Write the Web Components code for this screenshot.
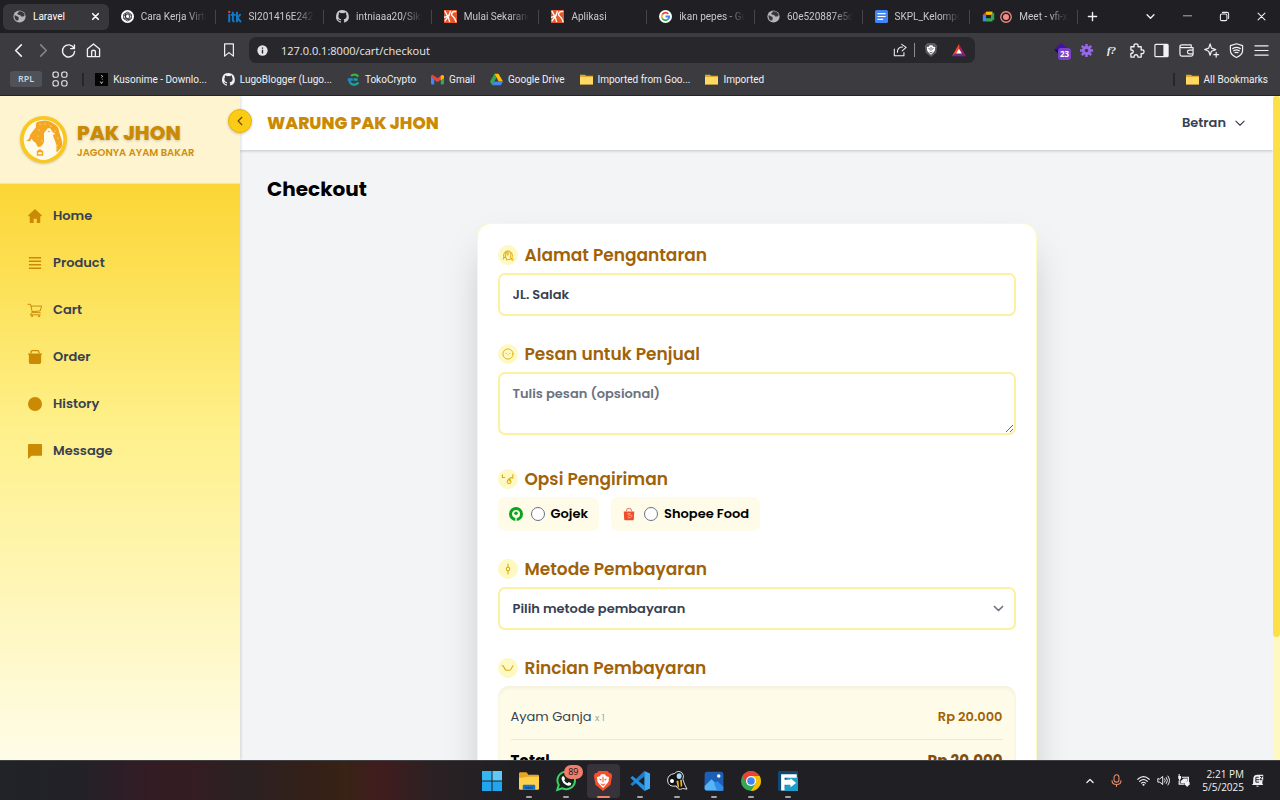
<!DOCTYPE html>
<html lang="id">
<head>
<meta charset="utf-8">
<title>Laravel</title>
<style>
html,body{margin:0;height:100%;overflow:hidden;background:#202024}
body{font-family:Roboto,"Noto Sans",sans-serif;font-size:10px;color:#f1f1f3}
</style>
</head>
<body>
<desktop-screen></desktop-screen>
<script>
const line = (d, w = 1.5) => `<g fill="none" stroke="currentColor" stroke-width="${w}" stroke-linecap="round" stroke-linejoin="round">${d}</g>`;
const github = `<path fill="currentColor" d="M8 0a8 8 0 0 0-2.5 15.600c.4.1.5-.2.5-.4v-1.500c-2.200.5-2.700-1-2.700-1-.4-.9-.9-1.200-.9-1.200-.7-.5.1-.5.1-.5.8.1 1.200.8 1.200.8.7 1.300 1.900.9 2.300.7.1-.5.3-.9.5-1.100-1.800-.2-3.600-.9-3.600-4 0-.9.3-1.600.8-2.100-.1-.2-.4-1 .1-2.100 0 0 .7-.2 2.200.8a7.700 7.700 0 0 1 4 0c1.500-1 2.200-.8 2.200-.8.4 1.100.2 1.900.1 2.100.5.6.8 1.300.8 2.100 0 3.100-1.900 3.800-3.700 4 .3.3.6.8.6 1.500v2.200c0 .2.1.5.6.4A8 8 0 0 0 8 0z"/>`;
const globe = `<circle cx="8" cy="8" r="7.500" fill="#b4b6ba"/><path fill="#37373c" d="M2 6.500c2 0 2 1.500 3.500 1.500S7 9.500 7 11s-1 2-2.500 2C2.500 12 1.500 9 2 6.500zM7 1.500c0 1.500-.5 2-2 2.500l1.500 2c1.500-.5 3 .5 3.500 2h3l1.500-2C13.500 3 11 1 7 1.500z"/>`;
const folder = `<path fill="#e0a92c" d="M0 2h6l1.500 1.500H16v10.500H0z"/><path fill="#ffd964" d="M0 5h16v9H0z"/>`;
const brand = `<path fill="#e4572a" d="M0 0h16v16H0z"/><path fill="none" stroke="#fff" stroke-width="1.700" d="M1 1c2 5 5 7 6 14M8 1C7 7 4 9 1 14M15 2c-6-1-7 4-4 6s3 5 4 7M0 9l7-2"/>`;
const lion = `<path fill="#fff" d="M3.200 4.700l2.300-.5 1-1.700h3l1 1.700 2.300.5-.4 3.800-1.900 2.500L8 13.500 5.500 11 3.600 8.500z"/><path fill="var(--lion,#f4502a)" d="M4.600 5.900l2.500.8-.8 1.100zM11.400 5.900l-2.500.8.8 1.100zM7.600 4.500h.8v4.500h-.8zM6 9.700l2 1.100 2-1.100-.5 1.100L8 12l-1.500-1.200z"/>`;
const ICONS = {
globe, github, folder, brand,
gpt:`<circle cx="8" cy="8" r="8" fill="#fff"/><g fill="none" stroke="#222" stroke-width="1"><path d="M8 2.500l4.700 2.700v5.600L8 13.500l-4.700-2.700V5.200z"/><path d="M5.500 4v5l5 3M13 7L8.300 4 3.500 7M3.500 10l5 2 4-2.500M8 5.200l2.500 1.400v2.800L8 10.800 5.500 9.400V6.600z"/></g>`,
itk:`<g fill="none" stroke="#1478c8" stroke-width="2.400"><path d="M1.500 5v10M6 2v10q0 2 2 2M3.500 6h6M11 2v13M15.500 5l-4 4.500L16 15"/></g><circle cx="1.500" cy="2.500" r="1.500" fill="#e23a3a"/>`,
google:`<circle cx="8" cy="8" r="8" fill="#fff"/><g fill="none" stroke-width="2.200"><path stroke="#ea4335" d="M11.500 4.900A4.600 4.600 0 0 0 4 5.700"/><path stroke="#fbbc05" d="M4 5.700a4.600 4.600 0 0 0 0 4.600"/><path stroke="#34a853" d="M4 10.300a4.600 4.600 0 0 0 7 1.200"/><path stroke="#4285f4" d="M11 11.500A4.600 4.600 0 0 0 12.600 8H8"/></g>`,
docs:`<rect width="16" height="16" rx="2" fill="#4285f4"/><path stroke="#fff" stroke-width="1.500" d="M3 4.500h10M3 8h10M3 11.500h7"/>`,
meet:`<path fill="#ea4335" d="M1 6l4-4v4z"/><path fill="#fbbc05" d="M5 2h8v4H5z"/><path fill="#4285f4" d="M1 6h4v8H1z"/><path fill="#34a853" d="M5 10h8v4H5zM11 6l4-3v10l-4-3z"/>`,
rec:`<circle cx="8" cy="8" r="7" fill="none" stroke="#f28b82" stroke-width="1.700"/><circle cx="8" cy="8" r="4" fill="#f28b82"/>`,
close:line('<path d="M3 3l10 10M13 3L3 13"/>'), boldclose:line('<path d="M4 4l8 8M12 4l-8 8"/>',2.4),
plus:line('<path d="M8 2v12M2 8h12"/>',2), down:line('<path d="M3 5.500l5 5 5-5"/>',2), up:line('<path d="M3 10.500l5-5 5 5"/>',2),
thin:line('<path d="M2.500 5.500l5.500 5.500 5.500-5.500"/>',1.5),
left:line('<path d="M11 2L5 8l6 6"/>',1.7), right:line('<path d="M5 2l6 6-6 6"/>',1.7),
min:line('<path d="M2 7h12"/>',1), restore:line('<rect x="2" y="4.500" width="9.500" height="9.500" rx="2"/><path d="M5 2h7q2 0 2 2v7"/>'),
reload:line('<path d="M13.800 5.500A6.500 6.500 0 1 0 14.500 9M14.300 2v4h-4"/>',1.5),
home:line('<path d="M1.500 6.500L8 1l6.500 5.500V14.500h-13zM6 14V8.500q2-1.500 4 0V14"/>',1.4),
mark:line('<path d="M3 1h10v14l-5-4-5 4z"/>',1.4),
info:`<circle cx="8" cy="8" r="7.500" fill="#e4e4e7"/><path fill="#28282c" d="M7 3.500h2v2H7zM7 7h2v5.500H7z"/>`,
share:line('<path d="M1.500 7v7.500h11V11M5 10.500q0-6 6-6M10 1.500l5 3.500-4.500 4"/>',1.2),
brave:`<path fill="#5b5b66" d="M4 0h8l3 3-1 8-6 5-6-5-1-8z"/><g style="--lion:#44444d">${lion}</g>`,
bat:`<path fill="#ff4724" d="M8 1L0 15l8-5z"/><path fill="#9e1f63" d="M8 1l8 14-8-5z"/><path fill="#662d91" d="M0 15h16L8 9.500z"/><path fill="#fff" d="M8 6.500l3.300 5.500H4.700z"/>`,
diamond:`<path fill="#4212a0" d="M8 0l8 7-8 7-8-7z"/><path fill="#17095a" d="M0 7h6l2 7z"/>`,
gear:`<g stroke="#9a66f0" stroke-width="2.600"><path d="M8 1v14M1 8h14M3 3l10 10M13 3L3 13"/></g><circle cx="8" cy="8" r="4.800" fill="#9a66f0"/><circle cx="8" cy="8" r="1.900" fill="#3b3b40"/>`,
puzzle:line('<path d="M2 4h3.500q-1-3 2-3t2 3H13v3.500q3-.8 3 1.800t-3 1.700V15H9.500q.3-2.500-2-2.500T5.500 15H2v-4q2.500 0 2.500-1.800T2 7.500z"/>',1.4),
panel:line('<rect x="1" y="1.500" width="14" height="13" rx="1"/>',1.3)+'<path fill="#f2f2f4" d="M10 2h5v12h-5z"/>',
wallet:line('<path d="M1 4.500V12q0 2 2 2h10q2 0 2-2V5H3Q1 5 1 3.500T3 2h10v3M15 7.500h-4q-2 0-2 2t2 2h4"/>',1.3),
spark:line('<path d="M6.500 1L8 5.500 12.500 7 8 8.800 6.500 13 5 8.800.7 7 5 5.500zM13 10v5M10.500 12.500h5"/>',1.3),
shield:line('<path d="M8 .8l6.500 2V8q0 4.500-6.500 7.500Q1.500 12.500 1.500 8V2.800zM4 6q4-2.500 8 0M5 8.300q3-1.800 6 0M6.500 10.300q1.500-.8 3 0"/>',1.3),
menu:line('<path d="M1 3h14M1 8h14M1 13h14"/>',1.3),
apps:line('<rect x="0" y="0" width="6" height="6" rx="2"/><rect x="10" y="0" width="6" height="6" rx="2"/><rect x="0" y="10" width="6" height="6" rx="2"/><rect x="10" y="10" width="6" height="6" rx="2"/>',1.3),
kuso:'<path fill="#050505" d="M0 0h16v16H0z"/><path stroke="#ddd" stroke-width="1.100" fill="none" d="M7.500 3l2 1-1.500 1.500M9 7v1M6.500 10.500l1.500 2.500 1.500-2.500"/>',
toko:'<g fill="none" stroke-width="2.800"><path stroke="#37b34a" d="M14 4.500A6 6 0 0 0 5 3.500"/><path stroke="#1b8ecb" d="M4 12a6 6 0 0 1-1-3M1 8h6"/><path stroke="#13a89e" d="M4 12a6 6 0 0 0 10-.5M8 8h5"/></g>',
gmail:'<path fill="#4285f4" d="M0 4h4v10H1q-1 0-1-1z"/><path fill="#34a853" d="M12 4h4v9q0 1-1 1h-3z"/><path fill="#ea4335" d="M0 4q1-3 3.500-1L8 6.500 12.500 3v5L8 11.500 3.500 8z"/><path fill="#fbbc04" d="M12 3.500Q15 1 16 4v2l-4 3z"/>',
drive:'<path fill="#34a853" d="M5.500 1L0 10.500 2.700 15 8 5.500z"/><path fill="#fbbc04" d="M5.500 1h5l5.500 9.500h-5.300z"/><path fill="#4285f4" d="M5 10.500h11L13.300 15H2.700z"/>',
nhome:'<path fill="currentColor" d="M8 0l8 7.500-1 1.200-1-.6V16h-4v-5H6.500v5H2V8l-1 .7L0 7.500z"/>',
nlist:'<path stroke="currentColor" stroke-width="1.600" d="M1 2h14M1 6h14M1 10h14M1 14h14"/>',
ncart:line('<path d="M0 1.500h3l2 9.500h9M3.300 3.500H15.500L14 9 4.700 10M4.500 11L2.500 13.500H14"/><circle cx="4.500" cy="15" r=".7"/><circle cx="12.500" cy="15" r=".7"/>',1.1),
nbag:'<path fill="currentColor" d="M0 4h16v1.500h-1V14q0 2-2 2H3q-2 0-2-2V5.500H0z"/><path fill="none" stroke="currentColor" stroke-width="1.500" d="M3.500 4V2.200q0-1.400 1.500-1.400h6q1.500 0 1.500 1.400V4"/>',
ndot:'<circle cx="8" cy="8" r="8" fill="currentColor"/>',
nmsg:'<path fill="currentColor" d="M1 0h14q1 0 1 1v11.500q0 1-1 1H4L0 17V1q0-1 1-1z"/>',
fpin:line('<path d="M3 12a6 6 0 1 1 10.500-1M5 10.500Q3 3 6 3.500L7 8M8 3v5M10 4q3 2 1 7M1.500 13.500q0-3 2.500-2.500t2 3.500q3 0 6-1.500M12 12.500q3-1 3 1.500t-3 0z"/>',1.3),
fmsg:line('<circle cx="8" cy="8" r="6.800"/><path d="M5.500 7v.3M10.500 7v.3M8 9v.2"/>',1.2),
fship:line('<path d="M.5 2.500v3.500h3M14.500 2v4.500H11L9 9"/><circle cx="9.500" cy="11.500" r="2.500"/><path d="M8.500 8.500h2v2"/>',1.4),
fpay:line('<circle cx="8" cy="8" r="2.300"/><path d="M8 1.500v4M8 10.500v4"/>',1.4),
fsum:line('<path d="M0 5h1.500L4 9.500q.8 1.500 2 1.500h4q1.200 0 2-1.500L14.500 5"/>',1.4),
gojek:'<circle cx="8" cy="8" r="6.300" fill="none" stroke="#0aa51c" stroke-width="3.400"/><circle cx="8" cy="7" r="2" fill="#0aa51c"/><path stroke="#fffdf0" stroke-width="1.500" d="M8 12v4"/>',
shopee:'<path fill="#ee4d2d" d="M2 5h12l-.5 9q0 1-1 1h-9q-1 0-1-1z"/><path fill="none" stroke="#f58a74" stroke-width="1.300" d="M5 5q0-3.500 3-3.500T11 5"/><path fill="none" stroke="#f9b3a4" stroke-width="1" d="M10 7.700q-3.500-1.600-3.500.3t3.300 1.400.1 2.600q-1.700.6-3.500-.6"/>',
win:'<path fill="#35b6f4" d="M0 0h7.600v7.600H0z"/><path fill="#5fcaf8" d="M8.400 0H16v7.600H8.400z"/><path fill="#22a5ef" d="M0 8.400h7.600V16H0zM8.400 8.400H16V16H8.400z"/>',
files:'<path fill="#e9a520" d="M0 2q0-1 1-1h5l1.500 2H15q1 0 1 1v10H0z"/><path fill="#ffd04c" d="M0 5.500L7 4.500h9V14q0 1-1 1H1q-1 0-1-1z"/><path fill="#1771c7" d="M3 15v-3q0-1 1-1h8q1 0 1 1v3z"/><path fill="#0b4e92" d="M5 13h6v1H5z"/>',
wa:'<path fill="#15241b" stroke="#3bd366" stroke-width="1.600" d="M1 15.200l1.200-4A7 7 0 1 1 5 13.800z"/><path fill="#fff" d="M5 4.300l1.300-.2 1 2.200-.8 1q1 1.800 2.700 2.500l1-1 2 1-.4 1.400q-1.500 1.200-4-.2T4.600 7q-.5-1.700.4-2.700z"/>',
bravebig:`<path fill="#f4502a" d="M4.500 0h7L13 1.500l1.500.3.8 2L14 11l-6 5-6-5L.7 3.800l.8-2L3 1.500z"/>${lion}`,
code:'<path fill="#1b7fcc" d="M11.500 0v4.300L2 12 .3 10.600z"/><path fill="#2490e0" d="M11.500 16v-4.300L2 4 .3 5.400z"/><path fill="#3eaaf5" d="M11.500 0L16 2v12l-4.500 2z"/>',
bee:'<path fill="#111" stroke="#fff" stroke-width=".7" d="M6 2q3-3 6-.5 2 2 .7 5l1.300 4 2 4-3.500-.5Q9 16 7.500 12 1 13 .5 8T6 2z"/><circle cx="4" cy="8" r="1.600" fill="#fff"/><path fill="#f3b628" d="M7.500 8l1.600-.5.6 6-1.200-1zM10.500 7h1.400l.3 5-1.200.8z"/><ellipse cx="9.700" cy="4" rx="2" ry="2.300" fill="#a7d9f7"/>',
photo:'<rect x=".5" y=".5" width="15" height="15" rx="2" fill="#1c5fb4"/><path fill="#57b5f7" d="M.5 12L6 6.500l9.500 9H2q-1.500 0-1.500-1.500z"/><path fill="#2e8be6" d="M8 10l2.500-2 5 4.500v3h-5z"/><circle cx="11.800" cy="4" r="1.400" fill="#fff"/>',
chrome:'<circle cx="8" cy="8" r="8" fill="#34a853"/><path fill="#ea4335" d="M1.100 4A8 8 0 0 1 14.900 4H8L4.500 10z"/><path fill="#fbbc04" d="M14.900 4A8 8 0 0 1 8 16l3.500-6L8 4z"/><circle cx="8" cy="8" r="4" fill="#fff"/><circle cx="8" cy="8" r="3" fill="#4285f4"/>',
fapp:'<rect width="16" height="16" rx="1" fill="#104a73"/><path fill="#1e9fca" d="M7 5h9v11H5z"/><path fill="#fff" d="M2.500 2.500H15v2.800H5.300V7H10V5.800l4.500 3.700L10 13v-2H5.300v4.500H2.500z"/>',
mic:line('<rect x="5" y="1" width="6" height="9" rx="3"/><path d="M2.500 8q0 5 5.500 5t5.500-5M8 13v2.500"/>',1.3),
wifi:line('<path d="M1 6.500q7-6.500 14 0M3.200 9q4.800-4.500 9.600 0M5.500 11.200q2.500-2 5 0"/>',1.4)+'<circle cx="8" cy="13.300" r="1.300" fill="currentColor"/>',
sound:line('<path d="M1 6v4h2.500L7 13V3L3.500 6zM9.500 6q1.500 2 0 4M11.500 4.300q3 3.700 0 7.400M13.500 2.500q4 5.500 0 11"/>',1.2),
batt:'<path fill="currentColor" d="M2 0h1.300v2.500H5v3l-1 1V8H2.500V6.500l-1-1v-3H2z"/><path fill="none" stroke="currentColor" stroke-width="1.500" d="M6 4h8v6M2.700 8v4.500H9"/><path fill="currentColor" d="M4.500 11V9L8 5.500h5V8L9 11.500z"/><path fill="currentColor" d="M9.500 10l3-1.500 3 1.500v2.500L12.500 16l-3-3.500z"/>',
bell:'<path fill="currentColor" d="M3 4q1-3 5-3h7v7h-1v4l1 1.500H1L2.500 12zM6 14.500h4q-2 2.500-4 0z"/><path fill="none" stroke="#222" stroke-width="1.200" d="M6 4h3.500M6 7h4M6 10h4M6 4v6M11 3h3l-3 4h3"/>'
};

class Base extends HTMLElement {
  connectedCallback() {
    if (this.shadowRoot) return;
    this.attachShadow({ mode: 'open' }).innerHTML = `<style>*{box-sizing:border-box}${this.css()}</style>${this.html()}`;
  }
  get(n) { return this.getAttribute(n) || ''; }
  css() { return ''; }
  html() { return '<slot></slot>'; }
}

customElements.define('ui-icon', class extends Base {
  css() { return ':host{display:inline-block;flex:none;width:var(--size,14px);height:var(--size,14px)}svg{display:block;width:100%;height:100%;overflow:visible}'; }
  html() { return `<svg viewBox="0 0 16 16" aria-hidden="true">${ICONS[this.get('name')]}</svg>`; }
});

/* ---------- browser chrome ---------- */
customElements.define('browser-tab', class extends Base {
  css() { return `
    :host{display:flex;align-items:center;min-width:0;padding:0 10px;color:#c9c9cd;--size:13px;height:26px;border-radius:6px;position:relative}
    :host([active]){background:#37373c;color:#fff}
    :host(:not([active]))::after{content:"";position:absolute;right:0;top:6px;width:1px;height:14px;background:#45454b}
    ui-icon+ui-icon{margin-left:5px;--size:12px}
    span{flex:1;margin-left:7px;white-space:nowrap;overflow:hidden;-webkit-mask-image:linear-gradient(90deg,#000 calc(100% - 20px),transparent)}
    :host([active]) span{-webkit-mask-image:none}
    button{all:unset;display:flex;--size:11px;margin-right:-2px}`; }
  html() { return `<ui-icon name="${this.get('icon')}"></ui-icon>${this.get('extra') ? `<ui-icon name="${this.get('extra')}"></ui-icon>` : ''}<span><slot></slot></span>${this.hasAttribute('active') ? '<button aria-label="Close tab"><ui-icon name="boldclose"></ui-icon></button>' : ''}`; }
});
customElements.define('tab-strip', class extends Base {
  css() { return `
    :host{display:flex;align-items:center;height:33px;background:#202024;padding-left:3px}
    .tabs{flex:0 1 1075px;min-width:0;display:grid;grid-template-columns:repeat(10,minmax(0,1fr));column-gap:2px}
    button{all:unset;display:flex;--size:11px;margin-left:9px}
    .win{margin-left:auto;display:flex;gap:26px;padding-right:13px}.win button{margin:0}`; }
  html() { return `<div class="tabs">
    <browser-tab icon="globe" active>Laravel</browser-tab><browser-tab icon="gpt">Cara Kerja Virtual</browser-tab>
    <browser-tab icon="itk">SI201416E2425</browser-tab><browser-tab icon="github">intniaaa20/Sikma</browser-tab>
    <browser-tab icon="brand">Mulai Sekarang</browser-tab><browser-tab icon="brand">Aplikasi</browser-tab>
    <browser-tab icon="google">ikan pepes - Google</browser-tab><browser-tab icon="globe">60e520887e5d0</browser-tab>
    <browser-tab icon="docs">SKPL_Kelompok</browser-tab><browser-tab icon="meet" extra="rec">Meet - vfi-x</browser-tab></div>
    <button aria-label="New tab"><ui-icon name="plus"></ui-icon></button>
    <div class="win"><button aria-label="Search tabs"><ui-icon name="down"></ui-icon></button><button aria-label="Minimize"><ui-icon name="min"></ui-icon></button><button aria-label="Restore"><ui-icon name="restore"></ui-icon></button><button aria-label="Close"><ui-icon name="close"></ui-icon></button></div>`; }
});
customElements.define('address-bar', class extends Base {
  css() { return `
    :host{display:flex;align-items:center;height:34px;background:#3b3b40;padding:0 11px}
    button{all:unset;display:flex;position:relative}
    .nav{display:flex;gap:10px;--size:15px}.dim{color:#85858b}
    .mark{margin-left:121px}
    .field{flex:0 1 726px;min-width:0;height:26px;margin-left:13px;background:#28282c;border-radius:7px;display:flex;align-items:center;padding:0 9px 0 8px;--size:11px}
    input{flex:1;min-width:0;border:0;background:none;outline:0;color:#e8e8eb;font:11px "Open Sans",sans-serif;padding:0 0 0 13px}
    .field i{width:1px;height:14px;background:#8c8c92;margin:0 9px 0 7px}
    .field button{--size:14px}.field button+button{margin-left:14px}
    .ext{margin-left:auto;display:flex;align-items:center;gap:10px;--size:15px}
    .fn{font:italic 700 11px "Liberation Serif",serif;color:#f1f1f3;width:15px;justify-content:center}
    .badge{position:absolute;left:4px;top:5px;background:#7a42c8;color:#fff;font:700 8px/12px "Open Sans",sans-serif;padding:0 2px;border-radius:3px}`; }
  html() { const b = (i, l, c = '') => `<button class="${c}" aria-label="${l}"><ui-icon name="${i}"></ui-icon></button>`;
    return `<div class="nav">${b('left','Back')}${b('right','Forward','dim')}${b('reload','Reload')}${b('home','Home')}</div>${b('mark','Bookmark','mark')}
    <div class="field"><ui-icon name="info"></ui-icon><input aria-label="Address" value="127.0.0.1:8000/cart/checkout">${b('share','Share')}<i></i>${b('brave','Shields')}${b('bat','Rewards')}</div>
    <div class="ext"><button aria-label="Extension"><ui-icon name="diamond"></ui-icon><span class="badge">23</span></button>${b('gear','Settings extension')}<button class="fn">f?</button>${b('puzzle','Extensions')}${b('panel','Sidebar')}${b('wallet','Wallet')}${b('spark','Assistant')}${b('shield','VPN')}${b('menu','Menu')}</div>`; }
});
customElements.define('bookmark-link', class extends Base {
  css() { return ':host{display:block}a{display:flex;align-items:center;gap:5px;color:#f1f1f3;text-decoration:none;white-space:nowrap;--size:13px}'; }
  html() { return `<a href="#"><ui-icon name="${this.get('icon')}"></ui-icon><slot></slot></a>`; }
});
customElements.define('bookmark-bar', class extends Base {
  css() { return `
    :host{display:flex;align-items:center;height:29px;background:#3b3b40;border-bottom:1px solid #242428;padding:0 12px 4px 10px;gap:15px}
    .group{background:#505259;color:#c4dbe8;font:600 9px/16px "Open Sans",sans-serif;border:0;border-radius:3px;padding:0 8px;margin-right:-4px}
    i{width:2px;height:13px;background:#27272b;margin-right:-4px}
    .end{margin-left:auto;display:flex;align-items:center;gap:15px}`; }
  html() { return `<button class="group">RPL</button><ui-icon name="apps"></ui-icon><i></i>
    <bookmark-link icon="kuso">Kusonime - Downlo...</bookmark-link><bookmark-link icon="github">LugoBlogger (Lugo...</bookmark-link><bookmark-link icon="toko">TokoCrypto</bookmark-link><bookmark-link icon="gmail">Gmail</bookmark-link><bookmark-link icon="drive">Google Drive</bookmark-link><bookmark-link icon="folder">Imported from Goo...</bookmark-link><bookmark-link icon="folder">Imported</bookmark-link>
    <div class="end"><i></i><bookmark-link icon="folder">All Bookmarks</bookmark-link></div>`; }
});

/* ---------- shop page ---------- */
customElements.define('brand-logo', class extends Base {
  css() { return `
    :host{display:flex;align-items:center;gap:10px;height:88px;padding:0 20px;background:#fef4d0;border-bottom:1px solid #fde68a}
    svg{width:47px;height:47px;flex:none;filter:drop-shadow(0 1px 1px #0003)}
    strong{display:block;padding-top:2px;font-weight:800;font-size:20px;line-height:24px;color:#ca8a04;text-shadow:0 1px 3px #0003}
    small{display:block;font-weight:600;font-size:10px;line-height:16px;color:#d08f0c;white-space:nowrap}`; }
  html() { return `<svg viewBox="0 0 47 47" role="img" aria-label="Logo"><circle cx="23.500" cy="23.500" r="23.500" fill="#f8c820"/><circle cx="23.500" cy="23.500" r="19.800" fill="#fffbec"/>
    <path fill="#f5a623" d="M17 6q10-4 17 2 5 3 5 7l3 10q1 5-2 8l-3 3-3-3-1-15-5-6-4 5v9q-3 7-8 4l-5-4-5-1q4-2 4-6l6-8q-1-3 1-5z"/>
    <path fill="#fffbec" d="M7 25l3 .5 1.500-3 2 3 2 1 2 4q3 2.500 6 1 2-3 1.500-7.500l.5-7 2.500-4.500 2-.5 2.500 4 3 2-3 1 3 7q3 9-2 14-7 6-15 3-6-3-8-9l-3-3 2-2z"/><circle cx="29" cy="15.500" r=".8" fill="#e29716"/>
    <path fill="none" stroke="#f5a623" stroke-width="1.500" d="M17.500 35.500h5v3.500h-5zM18.500 35q1-2 3 0"/><g fill="#fff3c4"><circle cx="20" cy="8" r=".6"/><circle cx="25" cy="8" r=".6"/><circle cx="31" cy="10" r=".6"/><circle cx="35" cy="15" r=".6"/><circle cx="38" cy="22" r=".6"/><circle cx="37" cy="29" r=".6"/><circle cx="19" cy="14" r=".6"/><circle cx="18" cy="20" r=".6"/><circle cx="22" cy="25" r=".6"/></g></svg>
    <div><strong>PAK JHON</strong><small>JAGONYA AYAM BAKAR</small></div>`; }
});
customElements.define('nav-item', class extends Base {
  css() { return ':host{display:block}a{display:flex;align-items:center;gap:11px;height:47px;padding-left:28px;color:#374151;text-decoration:none;font-weight:600;font-size:13px}ui-icon{color:#ca8a04}'; }
  html() { return `<a href="#"><ui-icon name="${this.get('icon')}"></ui-icon><slot></slot></a>`; }
});
customElements.define('shop-sidebar', class extends Base {
  css() { return `
    :host{display:block;position:relative;background:linear-gradient(#facc15,#fef08a 50%,#fefce8);box-shadow:1px 0 3px #0002;z-index:2}
    nav{padding-top:8px}
    button{position:absolute;right:-12px;top:13px;width:24px;height:24px;border-radius:50%;border:1px solid #eab308;background:#facc15;color:#713f12;display:grid;place-items:center;padding:0;--size:10px;box-shadow:0 1px 3px #0003}`; }
  html() { return `<brand-logo></brand-logo><nav><nav-item icon="nhome">Home</nav-item><nav-item icon="nlist">Product</nav-item><nav-item icon="ncart">Cart</nav-item><nav-item icon="nbag">Order</nav-item><nav-item icon="ndot">History</nav-item><nav-item icon="nmsg">Message</nav-item></nav><button aria-label="Collapse menu"><ui-icon name="left"></ui-icon></button>`; }
});
customElements.define('shop-header', class extends Base {
  css() { return `
    :host{display:flex;align-items:center;justify-content:space-between;height:54px;padding:0 27px;background:#fff;box-shadow:0 1px 3px #0003;position:relative}
    h1{margin:0;font-size:17px;font-weight:800;color:#ca8a04}
    button{all:unset;display:flex;align-items:center;gap:8px;font-weight:600;font-size:13px;color:#374151;--size:12px}`; }
  html() { return '<h1>WARUNG PAK JHON</h1><button>Betran <ui-icon name="thin"></ui-icon></button>'; }
});
customElements.define('form-section', class extends Base {
  css() { return `
    :host{display:block}
    .head{display:flex;align-items:center;gap:7px;height:24px;margin-bottom:6px;font-weight:600;font-size:17px;line-height:24px;color:#a16207}
    .dot{width:20px;height:20px;border-radius:50%;background:#fef9c3;display:grid;place-items:center;color:#dba90a;--size:12px}`; }
  html() { return `<label class="head" for="field"><span class="dot"><ui-icon name="${this.get('icon')}"></ui-icon></span>${this.get('label')}</label>${this.control()}`; }
  control() { return '<slot></slot>'; }
});
const FormSection = customElements.get('form-section');
const fieldCss = `
    input,textarea,select{display:block;width:100%;margin:0;background:#fff;border:2px solid #fdf0a0;border-radius:7px;padding:0 13px;color:#374151;font:600 13px/20px Poppins,Inter,sans-serif;outline:0}
    input,select{height:43px}textarea{height:63px;padding-top:10px;resize:vertical}
    ::placeholder{color:#6b7280;opacity:1}`;
customElements.define('text-section', class extends FormSection {
  css() { return super.css() + fieldCss; }
  control() { return `<input id="field" type="text" value="${this.get('value')}">`; }
});
customElements.define('note-section', class extends FormSection {
  css() { return super.css() + fieldCss + ':host{padding-bottom:6px}'; }
  control() { return `<textarea id="field" placeholder="${this.get('hint')}"></textarea>`; }
});
customElements.define('select-section', class extends FormSection {
  css() { return super.css() + fieldCss + 'select{appearance:none}.wrap{display:grid;align-items:center;--size:13px}.wrap>*{grid-area:1/1}ui-icon{color:#6b7280}.wrap ui-icon{justify-self:end;margin-right:11px;pointer-events:none}.dot ui-icon{color:#dba90a}'; }
  control() { return `<div class="wrap"><select id="field"><option>${this.get('value')}</option></select><ui-icon name="down"></ui-icon></div>`; }
});
customElements.define('choice-section', class extends FormSection {
  css() { return super.css() + `
    .row{display:flex;gap:12px}
    .row label{display:flex;align-items:center;height:34px;padding:0 11px;background:#fefce8;border-radius:7px;color:#000;font-weight:600;font-size:13px;--size:14px}
    input{appearance:none;width:14px;height:14px;margin:0 6px 0 8px;border:1px solid #6b7280;border-radius:50%;background:#fff}
    .head{cursor:default}`; }
  html() { return super.html().replace('<label class="head" for="field">', '<div class="head">').replace('</label>', '</div>'); }
  control() { return `<div class="row" role="radiogroup" aria-label="${this.get('label')}"><label><ui-icon name="gojek"></ui-icon><input type="radio" name="ship">Gojek</label><label><ui-icon name="shopee"></ui-icon><input type="radio" name="ship">Shopee Food</label></div>`; }
});
customElements.define('summary-section', class extends FormSection {
  css() { return super.css() + `
    .box{background:#fefce8;border-radius:11px;padding:6px 13px 9px;box-shadow:inset 0 2px 4px #0000000d}
    table{width:100%;border-collapse:collapse;color:#374151;font-size:13px}
    td,th{padding:3px 0 0;height:47px;text-align:left;font-weight:400}
    tr+tr>*{padding:0;height:42px;border-top:1px solid #e5e7eb}
    td{text-align:right;font-weight:600;color:#a16207}small{font-size:9px;color:#9ca3af}
    .total th{font-weight:700;font-size:15px;color:#000}.total td{font-weight:700;font-size:15px;color:#854d0e}
    .head{cursor:default}`; }
  html() { return super.html().replace('<label class="head" for="field">', '<div class="head">').replace('</label>', '</div>'); }
  control() { return '<div class="box"><table><tr><th scope="row">Ayam Ganja <small>x 1</small></th><td>Rp 20.000</td></tr><tr class="total"><th scope="row">Total</th><td>Rp 20.000</td></tr></table></div>'; }
});
customElements.define('checkout-card', class extends Base {
  css() { return `:host{display:grid;row-gap:26px;max-width:560px;margin:0 auto;padding:19px 20px 20px;background:#fff;border:1px solid #fef9c3;border-radius:14px;box-shadow:0 21px 42px -10px #00000040}`; }
  html() { return `<text-section icon="fpin" label="Alamat Pengantaran" value="JL. Salak"></text-section>
    <note-section icon="fmsg" label="Pesan untuk Penjual" hint="Tulis pesan (opsional)"></note-section>
    <choice-section icon="fship" label="Opsi Pengiriman"></choice-section>
    <select-section icon="fpay" label="Metode Pembayaran" value="Pilih metode pembayaran"></select-section>
    <summary-section icon="fsum" label="Rincian Pembayaran"></summary-section>`; }
});
customElements.define('shop-page', class extends Base {
  css() { return `
    :host{display:grid;grid-template-columns:240px minmax(0,1fr) 7px;min-height:0;overflow:hidden;background:#f3f4f6;font-family:Poppins,Inter,sans-serif}
    .view{overflow-y:auto;scrollbar-width:none;min-height:0}
    main{padding:25px 27px 27px}
    h2{margin:0 0 19px;font-size:20px;line-height:29px;font-weight:700;color:#000}
    .bar{background:#fef9c3}.bar div{height:81.5%;background:#fde047;border-radius:4px}`; }
  html() { return '<shop-sidebar></shop-sidebar><div class="view"><shop-header></shop-header><main><h2>Checkout</h2><checkout-card></checkout-card></main></div><div class="bar"><div></div></div>'; }
});

/* ---------- taskbar ---------- */
customElements.define('task-button', class extends Base {
  css() { return `
    :host{display:block}button{all:unset;position:relative;display:grid;place-items:center;width:33px;height:34px;border-radius:4px;--size:20px}
    :host([run]) button::after{content:"";position:absolute;bottom:0;width:6px;height:2px;border-radius:1px;background:#a3a3a8}
    :host([active]) button{background:#38333a}:host([active]) button::after{width:13px;background:#f4826c}
    span{position:absolute;right:0;top:1px;background:#ef7f6b;color:#26120e;font:9px/14px "Open Sans",sans-serif;padding:0 4px;border-radius:7px}`; }
  html() { return `<button aria-label="${this.get('label')}"><ui-icon name="${this.get('icon')}"></ui-icon>${this.get('count') ? `<span>${this.get('count')}</span>` : ''}</button>`; }
});
customElements.define('task-bar', class extends Base {
  css() { return `
    :host{display:grid;grid-template-columns:1fr auto 1fr;align-items:center;height:40px;background:linear-gradient(90deg,#202328,#232128 6%,#341c24 12%,#351c23 15%,#2a2122 19%,#332019 24%,#392216 27%,#401c1e 30%,#2a2123 34%,#202024 40%);border-top:1px solid #414145}
    .apps{grid-column:2;display:flex;gap:4px}
    .tray{display:flex;align-items:center;justify-content:flex-end;gap:7px;padding-right:16px;--size:13px;color:#f1f1f3}
    .tray ui-icon:nth-child(1){--size:10px;margin-right:8px}.tray ui-icon:nth-child(2){color:#e58d6c;margin-right:7px}
    time{text-align:right;font:10px/13px "Open Sans",sans-serif;margin-left:5px;white-space:nowrap}`; }
  html() { return `<div class="apps"><task-button icon="win" label="Start"></task-button><task-button run icon="files" label="Explorer"></task-button><task-button run icon="wa" count="89" label="WhatsApp"></task-button><task-button run active icon="bravebig" label="Brave"></task-button><task-button run icon="code" label="Editor"></task-button><task-button run icon="bee" label="Database"></task-button><task-button run icon="photo" label="Photos"></task-button><task-button run icon="chrome" label="Chrome"></task-button><task-button run icon="fapp" label="Transfer"></task-button></div>
    <div class="tray"><ui-icon name="up"></ui-icon><ui-icon name="mic"></ui-icon><ui-icon name="wifi"></ui-icon><ui-icon name="sound"></ui-icon><ui-icon name="batt"></ui-icon><time>2:21 PM<br>5/5/2025</time><ui-icon name="bell"></ui-icon></div>`; }
});
customElements.define('desktop-screen', class extends Base {
  css() { return ':host{display:grid;grid-template-rows:auto auto auto minmax(0,1fr) auto;height:100vh}'; }
  html() { return '<tab-strip></tab-strip><address-bar></address-bar><bookmark-bar></bookmark-bar><shop-page></shop-page><task-bar></task-bar>'; }
});
</script>
</body>
</html>
